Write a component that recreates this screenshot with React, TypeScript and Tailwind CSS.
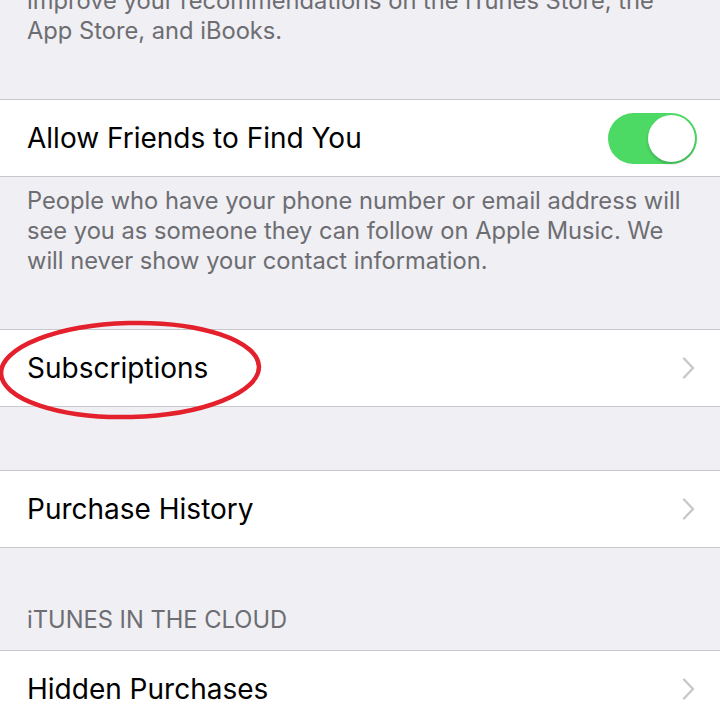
import type { ReactNode } from "react";

const font = { fontFamily: "Inter, 'Noto Sans', sans-serif" };

function Chevron() {
  return (
    <svg width="13" height="22" viewBox="0 0 13 22" className="shrink-0">
      <polyline points="2,1.5 11,11 2,20.5" fill="none" stroke="#c7c7cc" strokeWidth="2.4" strokeLinecap="round" strokeLinejoin="round" />
    </svg>
  );
}

function Row({ label, chevron = true, children }: { label: string; chevron?: boolean; children?: ReactNode }) {
  return (
    <div className="h-[78px] bg-white border-y border-[#c8c7cc] flex items-center pl-[27px] pr-[25px]">
      <span className="flex-1 text-[28px] text-black">{label}</span>
      {children}
      {chevron && <Chevron />}
    </div>
  );
}

function Toggle() {
  return (
    <div className="relative w-[89px] h-[51px] rounded-full bg-[#4cd964] mr-[-2px]">
      <div className="absolute right-[2px] top-[2px] size-[47px] rounded-full bg-white shadow-[0_2px_3px_rgba(0,0,0,0.2)]" />
    </div>
  );
}

export default function App() {
  return (
    <div className="relative w-[720px] h-[720px] overflow-hidden bg-[#efeff4]" style={font}>
      <div className="px-[27px] -mt-[14px] pb-[53px] text-[23.7px] leading-[30px] text-[#6d6d72]">
        <p>improve your recommendations on the iTunes Store, the</p>
        <p>App Store, and iBooks.</p>
      </div>

      <Row label="Allow Friends to Find You" chevron={false}>
        <Toggle />
      </Row>

      <div className="px-[27px] pt-[9px] pb-[53px] text-[23.7px] leading-[30px] text-[#6d6d72]">
        <p>People who have your phone number or email address will see you as someone they can follow on Apple Music. We will never show your contact information.</p>
      </div>

      <Row label="Subscriptions" />
      <div className="h-[63px]" />
      <Row label="Purchase History" />

      <div className="h-[102px] flex items-end px-[27px] pb-[12px]">
        <span className="text-[23.7px] text-[#6d6d72]">iTUNES IN THE CLOUD</span>
      </div>
      <Row label="Hidden Purchases" />

      <svg className="absolute left-0 top-[320px]" width="270" height="104" viewBox="0 0 270 104">
        <ellipse cx="130" cy="50" rx="129" ry="47" fill="none" stroke="#e3202b" strokeWidth="4.5" transform="rotate(-1.5 130 50)" />
      </svg>
    </div>
  );
}
